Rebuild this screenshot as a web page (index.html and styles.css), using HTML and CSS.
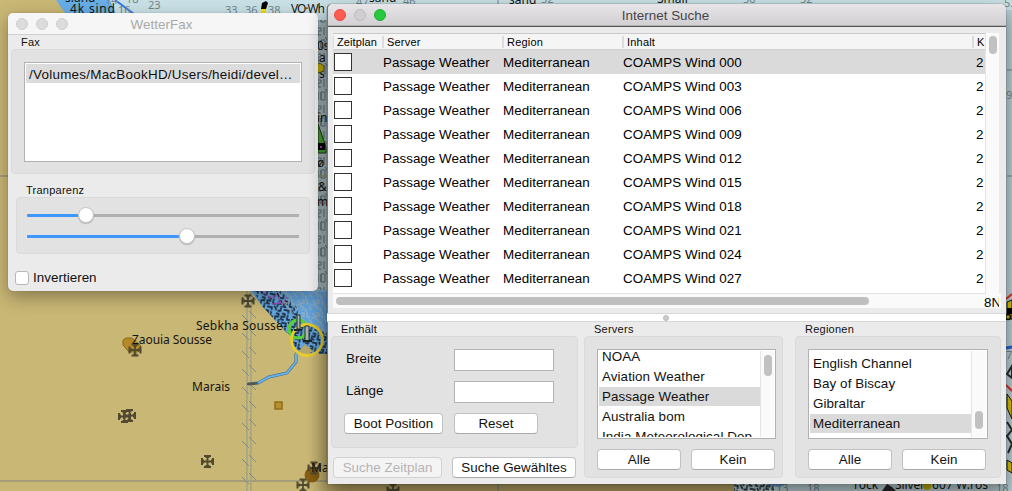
FILE: index.html
```
<!DOCTYPE html>
<html lang="de">
<head>
<meta charset="utf-8">
<title>WetterFax</title>
<link rel="stylesheet" href="styles.css">
</head>
<body>
<main class="desktop">
<svg class="chart" viewBox="0 0 1012 491" width="1012" height="491">
  <defs>
    <g id="church" fill="none" stroke="#514a30"><path d="M0-5V5M-5 0H5" stroke-width="1.8"/><path d="M-3.500-5.500H3.500M-3.500 5.500H3.500M-5.500-3.500V3.500M5.500-3.500V3.500" stroke-width="2"/><path d="M-2-4H2M-2 4H2M-4-2V2M4-2V2" stroke-width="1"/></g>
    <pattern id="border" width="16" height="18" patternUnits="userSpaceOnUse" x="241" y="2">
      <path d="M6 0V18M10 0V18" stroke="#a6a386" stroke-width="1.6"/><path d="M1 7L8 14M8 3L15 10" stroke="#7e8c88" stroke-width="1"/>
    </pattern>
    <pattern id="sound" width="29" height="26" patternUnits="userSpaceOnUse" x="317">
      <path d="M1 2h3v3h-3v4h3M7 1v8M1 14v8M4 14h4v8h-4zv8M8 11l2 3" fill="none" stroke="#5f6f75"/>
    </pattern>
    <pattern id="dense" width="17" height="13" patternUnits="userSpaceOnUse" patternTransform="rotate(12)">
      <path d="M1 1h3v3h-3v3h3M7 1v5h3M12 2h3v3h-3v4M2 10h5v3M9 8l3 4M16 7v5h-3" fill="none" stroke="#101820" stroke-width="1.3"/>
    </pattern>
    <pattern id="dense2" width="15" height="13" patternUnits="userSpaceOnUse">
      <path d="M1 1h3v3h-3v4h3M7 0v5h3M12 2h2v4h-3M2 10h4v3M9 7l3 4" fill="none" stroke="#a2b0b8" stroke-width="1.1"/>
    </pattern>
    <linearGradient id="edge"><stop offset="0" stop-color="#000" stop-opacity="0"/><stop offset="1" stop-color="#000" stop-opacity=".12"/></linearGradient>
  </defs>
  <rect width="1012" height="491" fill="#c9b775"/>
  <path d="M60 0H1012V491H734V350H328L300 340 260 300 200 150Z" fill="#c9e1e6"/>
  <path d="M56 0H110L116 14H66L60 6Z" fill="#68aee7"/>
  <path d="M115 0L134 14" stroke="#3478e8" stroke-width="2"/>
  <path d="M241 280H328V354H320L300 344 285 331 262 306 250 290Z" fill="#62a5de"/>
  <path d="M250 285H274L296 306 302 327 328 333V354H320L300 344 285 331 262 306Z" fill="url(#dense)"/>
  <path d="M267 285H328V336L300 322Z" fill="url(#dense2)"/>
  <path d="M262 291l8 7 7-3 5 10 5-8M272 304l9-1" fill="none" stroke="#b34acb"/>
  <path d="M316 20H330V290H316Z" fill="#a6babf"/>
  <path d="M316 20H330V290H316Z" fill="url(#sound)"/>
  <path d="M0 176H330M0 481H734" stroke="#989579" stroke-width="1.5"/>
  <path d="M328 484H734V491H328Z" fill="#b3a061"/>
  <path d="M1006 10H1012V491H734V485H1006Z" fill="#b9cfd4"/>
  <rect x="241" y="290" width="16" height="201" fill="url(#border)"/>
  <path d="M306 340L296 354 296 362 287 373 269 377 258 383 248 384" fill="none" stroke="#4a6270" stroke-width="3"/>
  <path d="M306 340L296 354 296 362 287 373 269 377 258 383" fill="none" stroke="#62b1ed" stroke-width="2"/>
  <path d="M247 384h8" stroke="#55564d" stroke-width="2"/>
  <circle cx="307" cy="340" r="14" fill="#62a5de"/><circle cx="307" cy="340" r="14" fill="url(#dense)"/>
  <path d="M297 353l8-9 8 7-6 4z" fill="#b5a66c"/>
  <circle cx="298" cy="329" r="9" fill="none" stroke="#55d03b" stroke-width="3.200"/>
  <circle cx="307" cy="340" r="15.500" fill="none" stroke="#e8cb2c" stroke-width="2.800"/>
  <path d="M297 315h3v14h-3zM305 326h4v15h-4z" fill="#a9b5ad" stroke="#252c2c"/>
  <path d="M294 330h8M303 341h9" stroke="#1a2222" stroke-width="2"/>
  <path d="M123 340l3-2h6l9 8-3 6h-9l-6-7z" fill="#b38a26" stroke="#8c691b"/>
  <use href="#church" x="135" y="350"/><use href="#church" x="248" y="301"/>
  <use href="#church" x="124.500" y="416.500"/><use href="#church" x="129.500" y="415.500"/>
  <use href="#church" x="207.500" y="461.500"/>
  <circle cx="312" cy="475" r="7.500" fill="#875f12"/>
  <use href="#church" x="314" y="468"/><use href="#church" x="303" y="485"/>
  <use href="#church" x="393" y="490"/>
  <rect x="275" y="402" width="7" height="7" fill="#b78f2e" stroke="#946c17" stroke-width="1.500"/>
  <g class="place">
    <text x="196" y="330" textLength="91">Sebkha Sousse-</text>
    <text x="132" y="344" textLength="80">Zaouia Sousse</text>
    <text x="192" y="391" textLength="38">Marais</text>
    <text x="311" y="472">Ma</text><text x="291" y="13" textLength="34">VO·Wh</text>
    <text x="65" y="2">s.and</text><text x="70" y="13" textLength="45">4k sind</text>
    <text x="369" y="2">sand</text><text x="509" y="4">sand</text><text x="657" y="3">Small</text>
    <text x="854" y="489">rock</text><text x="895" y="489" textLength="30">Silver</text><text x="932" y="489" textLength="56">607 W.ros</text>
    <text x="317" y="50">0s</text><text x="319" y="62">a</text><text x="319" y="78">s</text><text x="317" y="122">in</text><text x="317" y="167">ø</text><text x="318" y="191">&amp;</text><text x="317" y="206">m</text>
  </g>
  <g class="depth">
    <text x="105" y="4">14</text><text x="118" y="14">16</text><text x="126" y="3">18</text><text x="148" y="9">23</text><text x="225" y="14">33</text><text x="245" y="14">36</text><text x="268" y="14">38</text>
    <text x="356" y="6">47</text><text x="403" y="5">46</text><text x="541" y="3">52</text><text x="743" y="3">50</text><text x="800" y="3">52</text><text x="1004" y="7">53</text><text x="1006" y="99">9</text><text x="1006" y="359">7</text>
    <text x="776" y="492">13</text><text x="807" y="492">18</text><text x="996" y="492">18</text>
  </g>
  <path d="M262 3l4-2 2 2-2 6h-5z"/><path d="M261 9h5v4h-5z" fill="#f4df00"/>
  <path d="M498 0v4M498 484v7M1007 70h5M1007 176h5" stroke="#77858a"/>
  <ellipse cx="319" cy="68" rx="5" ry="4.500" fill="#cdb500" stroke="#665c16"/>
  <path d="M318 124L326 147V153H318Z" fill="#49a92e" stroke="#173c16"/>
  <rect x="317" y="143" width="8" height="7"/><circle cx="321" cy="147" r="1" fill="#e448df"/>
  <path d="M734 484h40v7h-40z" fill="url(#dense)"/><path d="M765 484h22l-8 3z" fill="#5d91c0"/>
  <path d="M882 491l5-7 5 3 4 4z" fill="#292529"/><circle cx="927" cy="486" r="4" fill="#bea900"/>
  <path d="M1006 299l6-5M1006 385l6 6" stroke="#df2e25" stroke-width="2"/><path d="M1006 348l6-1" stroke="#2760d5" stroke-width="3"/>
  <path d="M1007 302l5-2v19h-5zM1007 394l5 7v18l-5-11zM1007 460l5 3v10l-5-3z" fill="#d9bf00" stroke="#111"/>
  <path d="M1007 308h5v6h-5z"/><path d="M1007 374l5-8v12zM1007 422l5 8-5 6 5 8-4 9" fill="none" stroke="#252c2e" stroke-width="2"/>
  <circle cx="1008" cy="317" r="2.500" fill="#c6b20d" stroke="#111" stroke-width="1.500"/>
  <rect x="308" y="292" width="20" height="199" fill="url(#edge)"/>
</svg>

<section class="window fax-window">
  <header class="titlebar inactive"><span class="lights"><i></i><i></i><i></i></span><h1>WetterFax</h1></header>
  <h2 class="fax-label">Fax</h2>
  <div class="group fax-group"><div class="fax-list"><div class="fax-item">/Volumes/MacBookHD/Users/heidi/devel…</div></div></div>
  <h2 class="slider-label">Tranparenz</h2>
  <div class="group slider-group">
    <div class="slider"><span class="fill first"></span><i class="knob"></i></div>
    <div class="slider"><span class="fill second"></span><i class="knob"></i></div>
  </div>
  <label class="invert"><span class="tick"></span>Invertieren</label>
</section>

<section class="window search-window">
  <header class="titlebar"><span class="lights"><i class="red"></i><i></i><i class="green"></i></span><h1>Internet Suche</h1></header>
  <div class="table-pane">
    <div class="viewport">
      <div class="table">
        <div class="head"><span>Zeitplan</span><span>Server</span><span>Region</span><span>Inhalt</span><span>K</span></div>
        <div class="row selected"><i class="box"></i><span>Passage Weather</span><span>Mediterranean</span><span>COAMPS Wind 000</span><span>2</span></div>
        <div class="row"><i class="box"></i><span>Passage Weather</span><span>Mediterranean</span><span>COAMPS Wind 003</span><span>2</span></div>
        <div class="row"><i class="box"></i><span>Passage Weather</span><span>Mediterranean</span><span>COAMPS Wind 006</span><span>2</span></div>
        <div class="row"><i class="box"></i><span>Passage Weather</span><span>Mediterranean</span><span>COAMPS Wind 009</span><span>2</span></div>
        <div class="row"><i class="box"></i><span>Passage Weather</span><span>Mediterranean</span><span>COAMPS Wind 012</span><span>2</span></div>
        <div class="row"><i class="box"></i><span>Passage Weather</span><span>Mediterranean</span><span>COAMPS Wind 015</span><span>2</span></div>
        <div class="row"><i class="box"></i><span>Passage Weather</span><span>Mediterranean</span><span>COAMPS Wind 018</span><span>2</span></div>
        <div class="row"><i class="box"></i><span>Passage Weather</span><span>Mediterranean</span><span>COAMPS Wind 021</span><span>2</span></div>
        <div class="row"><i class="box"></i><span>Passage Weather</span><span>Mediterranean</span><span>COAMPS Wind 024</span><span>2</span></div>
        <div class="row"><i class="box"></i><span>Passage Weather</span><span>Mediterranean</span><span>COAMPS Wind 027</span><span>2</span></div>
      </div>
      <div class="vscroll"><i></i></div>
    </div>
    <div class="hscroll"><i></i><span>8N</span></div>
  </div>
  <div class="splitter"><i></i></div>
  <div class="filters">
    <div class="contains">
      <h2>Enthält</h2>
      <div class="group contains-group">
        <span>Breite</span><div class="field"></div>
        <span>Länge</span><div class="field"></div>
        <button>Boot Position</button><button class="reset">Reset</button>
      </div>
      <div class="actions"><button disabled>Suche Zeitplan</button><button>Suche Gewähltes</button></div>
    </div>
    <div class="servers">
      <h2>Servers</h2>
      <div class="group">
        <div class="list"><div class="items"><p>NOAA</p><p>Aviation Weather</p><p class="selected">Passage Weather</p><p>Australia bom</p><p>India Meteorological Dep</p></div><div class="vscroll"><i></i></div></div>
        <div class="pair"><button>Alle</button><button>Kein</button></div>
      </div>
    </div>
    <div class="regions">
      <h2>Regionen</h2>
      <div class="group">
        <div class="list"><div class="items"><p>English Channel</p><p>Bay of Biscay</p><p>Gibraltar</p><p class="selected">Mediterranean</p></div><div class="vscroll"><i></i></div></div>
        <div class="pair"><button>Alle</button><button>Kein</button></div>
      </div>
    </div>
  </div>
</section>
</main>
</body>
</html>
```
FILE: styles.css
```
* { box-sizing: border-box; }
body { margin: 0; overflow: hidden; font: 13.4px/16px "Liberation Sans", Arial, sans-serif; letter-spacing: .03px; color: #111; }
h1, h2, p { margin: 0; font-weight: normal; }
h2 { font-size: 11px; line-height: 14px; letter-spacing: .25px; }
.desktop { position: relative; width: 1012px; height: 491px; overflow: hidden; }
.chart { display: block; }
.place { font: 12px "Noto Sans", sans-serif; letter-spacing: 0; fill: #14150f; }
.depth { font: 11px "Noto Sans", sans-serif; letter-spacing: 0; fill: #74858b; }

.window { position: absolute; background: #ebebeb; }
.fax-window { left: 8px; top: 13px; width: 310px; height: 278px; border-radius: 5px; box-shadow: 0 6px 18px #0005, 0 0 1px #0006; }
.search-window { left: 327px; top: 4px; width: 679px; height: 480px; border-radius: 5px 5px 0 0; box-shadow: 0 9px 19px #0007, 0 0 1px #000; border-left: 1px solid #777; }
.titlebar { position: relative; height: 22px; display: flex; align-items: center; justify-content: center; border-radius: 5px 5px 0 0; border-bottom: 1px solid #b5b2b5; background: linear-gradient(#e8e5e8, #d2d0d2); }
.titlebar.inactive { background: #f6f6f6; border-color: #d0d0d0; }
.titlebar h1 { font-size: 13.4px; color: #484548; padding: 2px 3px 0 0; }
.inactive h1 { color: #a9a9a9; }
.lights { position: absolute; left: 8px; top: 5px; display: flex; gap: 8px; }
.search-window .lights { left: 6px; }
.lights i { width: 12px; height: 12px; border-radius: 50%; background: #d0cfd0; border: 1px solid #bfbdbf; }
.inactive .lights i { background: #dcdcdc; border-color: #cfcfcf; }
.lights .red { background: #ff5b52; border-color: #e64840; }
.lights .green { background: #28c93f; border-color: #1eae30; }
.group { background: #e2e2e2; border: 1px solid #dadada; border-radius: 4px; }

.fax-label { padding: 0 13px; height: 14px; }
.fax-group { margin: 0 3px; height: 125px; padding: 12px; }
.fax-list { height: 100px; width: 278px; border: 1px solid #b1b1b1; background: #fff; padding: 1px; }
.fax-item { background: #dcdcdc; height: 19px; padding: 1px 3px 0; line-height: 20px; white-space: nowrap; overflow: hidden; letter-spacing: .27px; }
.slider-label { margin: 9px 18px 0; }
.slider-group { margin: 0 8px; height: 57px; padding: 9px 10px 0; }
.slider { display: flex; align-items: center; height: 16px; margin-bottom: 5px; background: linear-gradient(#b0b0b0, #b0b0b0) center / 100% 3px no-repeat; }
.fill { height: 3px; background: #3c98fc; border-radius: 2px; }
.first { width: 51px; }
.second { width: 152px; }
.knob { width: 16px; height: 16px; border-radius: 50%; background: #fff; border: 1px solid #c6c6c6; box-shadow: 0 1px 1px #0003; }
.invert { display: flex; align-items: center; gap: 4px; margin: 16px 7px 0; }
.tick { width: 14px; height: 14px; background: #fff; border: 1px solid #b8b8b8; border-radius: 3px; }

.table-pane { height: 287px; border-top: 1px solid #555; padding: 6px 6px 0 5px; }
.viewport { display: flex; height: 261px; }
.table { width: 652px; height: 261px; overflow: hidden; background: #fff; border-top: 1px solid #c9c9c9; border-bottom: 1px solid #e2e2e2; }
.head, .row { display: grid; grid-template-columns: 50px 120px 120px 353px 9px; align-items: center; }
.head { grid-template-columns: 49px 120px 120px 350px 13px; height: 16px; font-size: 11px; letter-spacing: .2px; background: #f5f5f5; border-bottom: 1px solid #cfcfcf; color: #000; }
.head span { border-left: 2px solid #dcdcdc; line-height: 12px; padding-left: 3px; white-space: nowrap; overflow: hidden; }
.head span:first-child { border-left-width: 1px; letter-spacing: .1px; }
.row { height: 24px; color: #000; }
.row span { white-space: nowrap; padding-top: 1px; }
.row.selected, .items .selected { background: #dadada; }
.box { width: 18px; height: 18px; margin-left: 1px; background: #fff; border: 1px solid #333; }
.vscroll { width: 14px; background: #fafafa; border-left: 1px solid #e5e5e5; }
.vscroll i { display: block; width: 8px; height: 18px; margin: 3px 0 0 3px; background: #c1c1c1; border-radius: 4px; }
.hscroll { display: flex; width: 668px; height: 14px; padding: 3px 0 0 3px; background: #fafafa; }
.hscroll i { width: 533px; height: 8px; background: #bfbfbf; border-radius: 4px; }
.hscroll span { width: 15px; overflow: hidden; margin-left: 115px; line-height: 11px; letter-spacing: 0; color: #000; white-space: nowrap; }
.splitter { height: 9px; margin-left: -1px; background: #fff; border-top: 1px solid #d8d8d8; border-bottom: 1px solid #d8d8d8; display: flex; align-items: center; justify-content: center; }
.splitter i { width: 6px; height: 6px; margin-right: 2px; border-radius: 50%; background: #ccc; border: 1px solid #bbb; }

.filters { display: flex; gap: 6px; padding: 0 5px 0 3px; }
.filters h2 { height: 14px; padding-left: 10px; }
.contains { width: 247px; }
.contains-group { height: 112px; padding: 12px; display: grid; grid-template-columns: 99px 100px; column-gap: 11px; grid-template-rows: 22px 22px 21px; row-gap: 10px; align-items: center; }
.contains-group span { padding-left: 2px; margin-top: -2px; }
.field { height: 22px; background: #fff; border: 1px solid #b5b5b5; }
button { height: 21px; padding: 0; font: inherit; letter-spacing: .03px; line-height: 19px; color: #111; background: #fff; border: 1px solid #c1c1c1; border-bottom-color: #aaa; border-radius: 4px; white-space: nowrap; }
button:disabled { color: #b5b5b5; background: #f4f4f4; border-color: #d2d2d2; }
.reset { width: 84px; }
.actions { display: flex; gap: 10px; padding: 9px 2px; }
.actions button:first-child { width: 109px; }
.actions button:last-child { width: 124px; }
.servers { width: 199px; }
.regions { width: 206px; }
.servers h2 { padding-left: 10px; }
.servers .group, .regions .group { height: 142px; padding: 12px 12px 0; }
.regions { margin-left: 6px; flex: none; }
.servers, .contains { flex: none; }
.list { display: flex; height: 90px; border: 1px solid #b1b1b1; background: #fff; padding: 1px; overflow: hidden; }
.servers .list { width: 179px; }
.regions .list { width: 180px; }
.items { width: 161px; height: 86px; flex: none; overflow: hidden; }
.items p { height: 20px; line-height: 20px; padding-left: 3px; white-space: nowrap; letter-spacing: .08px; }
.items .selected { height: 19px; margin-bottom: 1px; }
.servers .items p:first-child { margin-top: -4px; }
.regions .items { padding-top: 3px; }
.list .vscroll { flex: 1; }
.servers .vscroll i { margin-top: 4px; height: 21px; }
.regions .vscroll i { margin-top: 60px; }
.pair { display: flex; gap: 10px; margin-top: 10px; }
.pair button { width: 84px; flex: none; }
```
